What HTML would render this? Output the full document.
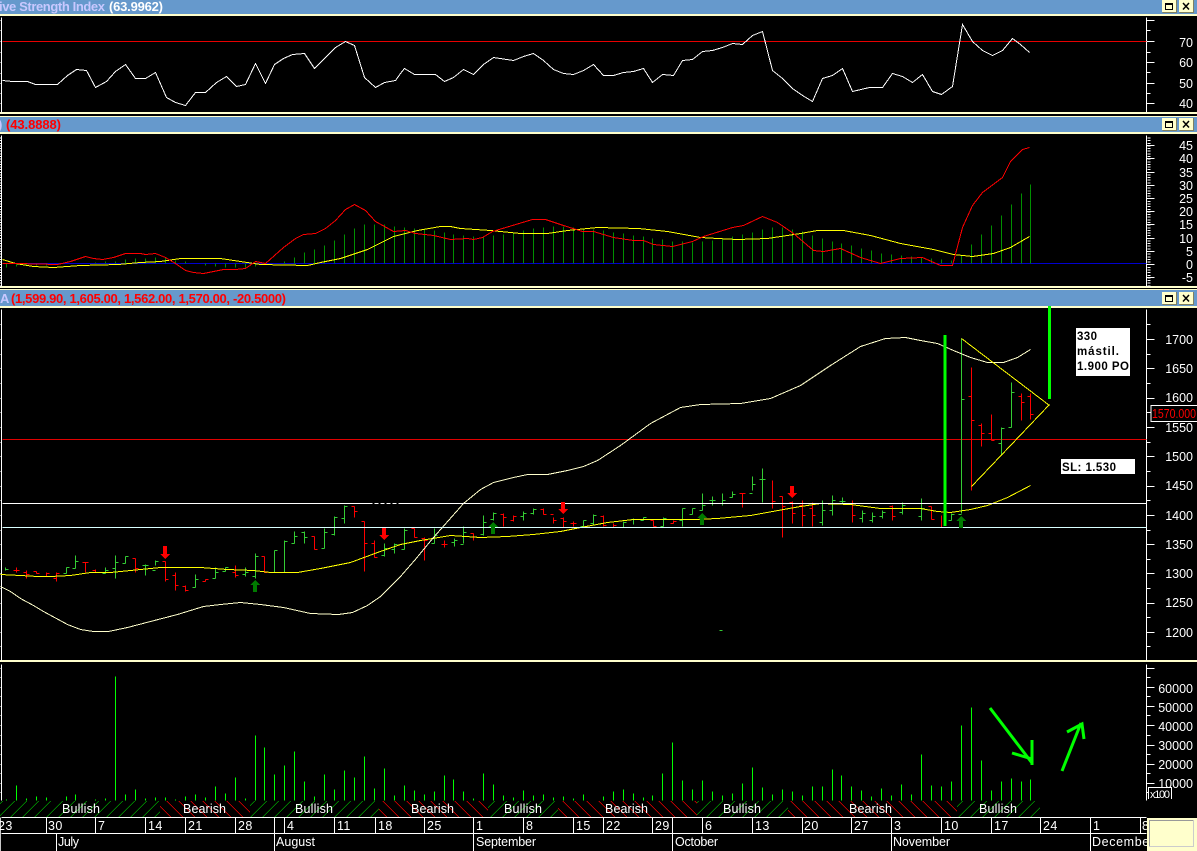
<!DOCTYPE html>
<html><head><meta charset="utf-8"><title>Chart</title>
<style>
html,body{margin:0;padding:0;background:#000;width:1197px;height:851px;overflow:hidden}
svg{display:block}
text{font-family:"Liberation Sans",sans-serif;font-size:12.5px;fill:#fff}
.t{font-weight:bold;font-size:13px}
.n{font-weight:bold;font-size:11.5px;fill:#000}
.l path,.l polyline{fill:none}
</style></head><body>
<svg xmlns="http://www.w3.org/2000/svg" width="1197" height="851" viewBox="0 0 1197 851">
<defs>
<clipPath id="cg"><path d="M0 801h160v16H0zM250 801h129v16H250zM488 801h70v16H488zM697 801h91v16H697zM957 801h83v16H957z"/></clipPath>
<clipPath id="cr"><path d="M160 801h90v16H160zM379 801h109v16H379zM558 801h139v16H558zM788 801h169v16H788z"/></clipPath>
</defs>
<rect width="1197" height="851" fill="#000"/>

<!-- window chrome -->
<g shape-rendering="crispEdges">
<rect x="0" y="0" width="1197" height="14" fill="#6699cc"/><rect x="0" y="14" width="1197" height="2" fill="#ffffcc"/>
<rect x="0" y="112" width="1197" height="2" fill="#ffffcc"/><rect x="0" y="116" width="1197" height="1" fill="#ffffcc"/>
<rect x="0" y="117" width="1197" height="15" fill="#6699cc"/><rect x="0" y="132" width="1197" height="2" fill="#ffffcc"/>
<rect x="0" y="286" width="1197" height="2" fill="#ffffcc"/><rect x="0" y="289" width="1197" height="1" fill="#ffffcc"/>
<rect x="0" y="290" width="1197" height="16" fill="#6699cc"/><rect x="0" y="306" width="1197" height="2" fill="#ffffcc"/>
<rect x="0" y="660" width="1197" height="2" fill="#ffffcc"/>
</g>

<text x="-1" y="11" class="t" style="fill:#c8c8ff" textLength="106">ive Strength Index</text>
<text x="109" y="11" class="t" textLength="54">(63.9962)</text>
<text x="-2" y="129" class="t" style="fill:#c8c8ff">)</text>
<text x="6" y="129" class="t" style="fill:#ff0000" textLength="55">(43.8888)</text>
<text x="0" y="303" class="t" style="fill:#c8c8ff">A</text>
<text x="11" y="303" class="t" style="fill:#ff0000" textLength="275">(1,599.90, 1,605.00, 1,562.00, 1,570.00, -20.5000)</text>

<!-- window buttons -->
<g shape-rendering="crispEdges">
<path fill="#ffffcc" d="M1162 0h14v12h-14zM1179 0h14v12h-14zM1162 118h14v12h-14zM1179 118h14v12h-14zM1162 292h14v12h-14zM1179 292h14v12h-14z"/>
<path fill="none" stroke="#808060" d="M1176.500 0v12.500h-14M1193.500 0v12.500h-14M1176.500 118v12.500h-14M1193.500 118v12.500h-14M1176.500 292v12.500h-14M1193.500 292v12.500h-14"/>
<path fill="none" stroke="#000" d="M1165.500 3.500h7v6h-7zM1165.500 4.500h7M1165.500 121.500h7v6h-7zM1165.500 122.500h7M1165.500 295.500h7v6h-7zM1165.500 296.500h7"/>
</g>
<path fill="none" stroke="#000" stroke-width="1.500" d="M1183 3l6 6.500M1189 3l-6 6.500M1183 121l6 6.500M1189 121l-6 6.500M1183 295l6 6.500M1189 295l-6 6.500"/>

<g class="l" transform="translate(.5 .5)" shape-rendering="crispEdges">
<!-- left axes -->
<path stroke="#fff" d="M1 17V112M0 20h1M0 30h1M0 41h1M0 52h1M0 62h1M0 73h1M0 83h1M0 93h1M0 103h1M1 135V286M1 309V660M0 324h1M0 339h1M0 354h1M0 368h1M0 383h1M0 398h1M0 412h1M0 427h1M0 442h1M0 456h1M0 471h1M0 486h1M0 500h1M0 515h1M0 530h1M0 544h1M0 559h1M0 573h1M0 588h1M0 603h1M0 617h1M0 632h1M0 646h1M1 664V800M0 668h1M0 677h1M0 687h1M0 696h1M0 706h1M0 715h1M0 725h1M0 735h1M0 745h1M0 754h1M0 764h1M0 773h1M0 783h1M0 792h1"/>
<path stroke="#fff" stroke-dasharray="1 1.640" d="M0 137V286"/>

<!-- right axes -->
<path stroke="#fff" d="M1146 17V112M1146 20h8M1146 30h4M1146 41h8M1146 52h4M1146 62h8M1146 72h4M1146 83h8M1146 93h4M1146 103h8"/>
<path stroke="#fff" d="M1146 135V286M1146 145h8M1146 158h8M1146 172h8M1146 185h8M1146 198h8M1146 211h8M1146 224h8M1146 238h8M1146 251h8M1146 264h8M1146 277h8"/>
<path stroke="#fff" stroke-dasharray="1 1.640" d="M1148.500 137V286" stroke-width="1"/>
<path stroke="#fff" stroke-dasharray="1 1.640" d="M1147.500 137V286M1149.500 137V286"/>
<path stroke="#fff" d="M1146 309V660M1146 324h4M1146 339h8M1146 354h4M1146 368h8M1146 383h4M1146 398h8M1146 412h4M1146 427h8M1146 442h4M1146 456h8M1146 471h4M1146 486h8M1146 500h4M1146 515h8M1146 530h4M1146 544h8M1146 559h4M1146 573h8M1146 588h4M1146 603h8M1146 617h4M1146 632h8M1146 646h4"/>
<path stroke="#fff" d="M1146 664V800M1146 668h8M1146 677h4M1146 687h8M1146 696h4M1146 706h8M1146 715h4M1146 725h8M1146 735h4M1146 745h8M1146 754h4M1146 764h8M1146 773h4M1146 783h8M1146 792h4"/>

<!-- RSI -->
<path stroke="#e80000" d="M2 41H1146"/>
<polyline stroke="#fff" points="2,80 12,81 27,81 35,84 57,84 67,75 76,69 86,70 95,87 106,81 115,71 125,64 135,78 145,78 155,72 166,97 175,102 185,105 195,92 205,92 216,82 226,76 236,86 245,84 255,63 265,83 274,64 283,58 292,54 304,53 314,68 325,57 335,47 345,41 354,45 364,77 375,87 384,82 395,80 400,73 404,68 414,74 435,74 444,81 453,77 463,69 473,74 483,64 493,57 513,60 523,56 533,53 543,60 553,69 563,73 573,74 583,70 593,64 603,75 613,75 623,72 633,71 643,68 652,82 662,74 673,75 682,60 692,59 702,51 712,50 722,47 732,43 742,44 752,35 762,31 772,70 782,78 792,88 802,95 812,101 822,78 832,75 842,68 852,91 869,87 882,87 892,73 902,76 912,82 922,74 932,91 941,94 952,86 962,24 972,41 982,50 992,55 1002,50 1012,38 1020,44 1029,52"/>

<!-- MACD -->
<path stroke="#0000d0" d="M2 263H1146"/>
<path stroke="#009000" d="M6 263V267M16 263V266M26 263V265M36 263V265M46 263V265M95 263V262M105 263V261M115 263V261M125 263V259M135 263V258M145 263V258M155 263V257M165 263V257M175 263V260M185 263V261M205 263V265M215 263V266M225 263V267M235 263V267M245 263V267M255 263V266M284 263V261M294 263V257M304 263V252M314 263V249M324 263V245M334 263V240M344 263V234M354 263V228M364 263V224M374 263V224M384 263V224M394 263V226M404 263V227M414 263V228M424 263V229M434 263V230M444 263V232M453 263V234M463 263V235M473 263V236M483 263V236M493 263V235M503 263V234M513 263V233M523 263V230M533 263V228M543 263V227M553 263V226M563 263V226M573 263V227M583 263V228M593 263V229M603 263V230M613 263V232M623 263V233M633 263V235M643 263V236M652 263V238M662 263V239M672 263V241M682 263V241M692 263V242M702 263V241M712 263V240M722 263V238M732 263V236M742 263V234M752 263V232M762 263V229M772 263V227M782 263V227M792 263V229M802 263V231M812 263V235M822 263V238M832 263V241M841 263V243M851 263V245M861 263V248M871 263V250M881 263V253M891 263V254M901 263V255M911 263V256M921 263V257M931 263V258M941 263V259M951 263V260M961 263V255M971 263V244M981 263V234M991 263V225M1001 263V215M1011 263V204M1021 263V193M1030 263V184"/>
<polyline stroke="#ffff00" points="2,259 15,263 33,266 53,267 80,265 118,264 140,262 160,261 180,258 220,258 240,261 260,264 307,265 320,262 340,258 367,249 393,236 417,230 440,226 450,226 460,228 490,230 520,233 547,233 567,230 597,227 638,228 667,231 700,237 717,238 737,239 767,238 800,233 817,230 843,230 870,235 900,243 933,249 953,254 972,256 993,253 1010,247 1029,236"/>
<polyline stroke="#ff0000" points="2,263 17,263 57,264 70,261 85,256 93,258 102,259 113,257 125,253 140,253 145,254 155,253 165,257 175,263 185,270 193,272 203,273 213,271 223,269 235,269 245,268 255,261 265,263 283,247 295,238 303,234 315,233 325,228 335,220 345,209 354,204 365,210 375,221 393,231 405,230 415,233 433,235 450,239 467,238 473,239 482,237 492,231 512,225 532,219 545,219 563,225 582,231 593,231 613,237 633,240 643,240 653,244 672,246 692,241 703,236 732,227 743,225 762,216 777,222 793,233 813,250 823,251 840,248 860,257 880,263 900,258 922,257 940,265 952,265 962,227 972,205 982,192 1002,177 1010,161 1022,149 1029,147"/>

<!-- price -->
<path stroke="#e00000" d="M2 439H1146"/>
<path stroke="#33cc33" d="M5 567V570M5 569h3M66 567V573M63 573h3M66 567h3M75 555V568M72 568h3M75 561h3M105 567V573M102 573h3M105 570h3M115 555V578M112 568h3M115 562h3M125 556V563M122 563h3M125 556h3M145 564V575M142 565h6M155 560V565M152 570h3M155 561h3M195 574V587M192 587h3M195 579h3M215 567V578M212 578h3M215 572h3M225 567V571M222 571h3M225 567h3M245 567V576M242 574h3M245 572h3M255 553V578M252 576h3M255 556h3M274 550V572M274 550h3M284 540V572M284 541h3M294 531V543M291 543h3M294 536h3M304 531V543M301 532h3M304 537h3M324 528V548M321 548h3M324 532h3M334 516V535M331 534h3M334 517h3M344 505V523M341 518h3M344 506h3M384 543V556M381 555h3M384 548h3M394 543V553M391 549h3M394 544h3M404 528V549M401 549h3M404 530h3M434 528V543M431 543h3M434 535h3M454 538V546M451 542h3M454 540h3M463 526V543M460 544h3M463 532h3M483 515V535M480 534h3M483 522h3M493 512V520M490 519h3M493 513h3M523 511V520M520 516h3M523 513h3M533 508V514M530 513h3M533 509h3M583 520V527M580 526h3M583 520h3M593 514V524M590 523h3M593 515h3M623 521V527M620 527h3M623 522h3M633 518V524M630 519h6M643 517V520M640 520h3M643 517h3M663 517V526M660 526h3M663 518h3M682 508V526M679 520h3M682 508h3M692 508V514M689 514h3M692 508h3M702 493V510M699 510h3M702 505h3M712 496V505M709 500h6M722 493V505M722 500h3M732 491V497M729 497h3M732 494h3M752 476V490M749 493h3M752 484h3M762 468V502M759 479h6M822 500V525M819 522h3M822 510h3M832 495V515M829 510h3M832 500h3M842 497V503M839 501h6M862 510V522M859 518h3M862 513h3M872 512V522M869 520h3M872 516h3M882 510V518M879 516h3M882 512h3M902 502V514M899 512h3M902 505h3M921 498V520M918 516h3M921 508h3M951 513V520M948 520h3M951 514h3M961 338V513M958 514h3M961 399h3M1001 427V455M998 443h3M1001 428h3M1011 382V427M1008 427h3M1011 392h3M719 630h3"/>
<path stroke="#ff0000" d="M16 567V572M13 570h6M26 570V578M23 572h3M26 574h3M36 571V573M33 571h3M36 573h3M46 572V576M43 576h3M46 573h3M56 572V581M53 578h3M56 573h3M85 562V572M82 562h3M85 562h3M95 569V572M92 570h3M135 558V572M132 558h3M135 568h3M165 561V581M162 561h3M165 579h3M175 572V590M172 575h3M175 585h3M185 585V591M182 586h3M185 590h3M205 579V581M202 581h3M205 579h3M235 565V577M232 572h3M235 575h3M264 556V572M261 556h3M264 572h3M314 536V549M311 536h3M314 549h3M354 506V517M351 506h3M354 511h3M364 521V571M361 521h3M364 543h3M374 540V557M371 543h3M374 557h3M414 528V537M411 528h3M414 537h3M424 537V560M421 538h3M424 540h3M444 540V547M441 544h6M473 533V540M470 533h3M503 513V526M500 514h3M503 517h3M513 515V521M510 520h3M513 516h3M543 508V514M540 509h3M543 514h3M550 514h3M553 517V523M553 520h3M563 517V527M560 518h3M563 521h3M573 521V526M570 523h6M603 515V526M600 516h3M603 525h3M613 523V527M610 527h3M613 525h3M653 520V526M650 520h3M653 526h3M673 520V523M670 523h3M673 521h3M742 493V507M739 493h6M772 480V508M772 501h3M782 496V537M779 496h3M782 506h3M792 501V523M789 502h3M792 513h3M802 500V526M799 505h3M802 515h3M812 502V526M809 508h3M812 515h3M852 500V522M849 503h3M852 515h3M892 505V520M889 506h3M892 516h3M931 506V519M928 506h3M931 519h3M941 515V527M938 527h3M971 367V490M968 396h3M971 420h3M981 423V446M978 425h3M981 433h3M991 414V440M988 433h3M991 440h3M1021 393V420M1018 396h3M1021 402h3M1030 393V419M1027 396h3M1030 414h3"/>
<polyline stroke="#ffff00" points="0,574 20,575 37,576 50,576 70,575 90,572 110,572 130,570 160,567 200,567 227,569 253,570 270,572 297,572 320,568 350,562 377,552 400,544 420,540 450,535 480,537 507,536 533,534 560,531 580,527 607,522 633,519 667,519 693,519 717,518 750,515 783,509 800,506 820,503 850,504 880,508 900,508 920,508 937,511 950,512 970,509 987,505 1007,497 1030,485"/>
<polyline stroke="#ffffcc" points="0,586 10,591 20,598 33,605 43,611 67,624 80,629 93,631 108,631 127,627 150,621 177,614 203,606 220,604 240,602 260,604 283,607 310,613 338,614 352,612 367,605 380,596 400,576 414,560 433,537 463,503 480,489 493,482 513,477 527,474 547,474 567,470 583,466 597,460 620,445 650,423 680,407 700,404 740,403 770,398 800,385 830,365 860,346 885,338 905,337 920,340 937,343 953,350 970,357 987,362 1003,362 1017,357 1030,349"/>
<path stroke="#fff" d="M2 503H368M400 503H1146"/>
<path stroke="#fff" stroke-dasharray="4 2" d="M368 503H400"/>
<path stroke="#d8ffff" d="M2 527H1146"/>
<path stroke="#ffff00" d="M961 338L1049 405M971 486L1049 404"/>

<!-- volume -->
<path stroke="#00ff00" d="M6 799V800M16 785V800M26 798V800M36 796V800M46 797V800M66 796V800M75 794V800M95 799V800M105 798V800M115 676V800M125 794V800M135 789V800M145 798V800M155 797V800M165 797V800M175 799V800M185 796V800M195 794V800M205 797V800M215 786V800M225 793V800M235 777V800M245 798V800M255 735V800M264 747V800M274 774V800M284 765V800M294 751V800M304 781V800M314 796V800M324 774V800M334 789V800M344 770V800M354 777V800M364 756V800M374 788V800M384 768V800M394 795V800M404 785V800M414 790V800M424 794V800M434 791V800M444 775V800M453 779V800M463 791V800M473 798V800M483 773V800M493 784V800M503 795V800M513 797V800M523 790V800M533 795V800M543 794V800M553 797V800M563 796V800M573 798V800M583 794V800M603 796V800M613 791V800M623 789V800M633 793V800M643 797V800M652 795V800M662 773V800M672 742V800M682 780V800M692 789V800M702 780V800M712 791V800M722 795V800M732 793V800M742 783V800M752 767V800M762 787V800M772 794V800M782 789V800M792 791V800M802 795V800M812 786V800M822 786V800M832 769V800M841 775V800M851 786V800M861 790V800M871 796V800M881 788V800M891 795V800M901 784V800M911 794V800M921 754V800M931 785V800M941 786V800M951 781V800M961 725V800M971 707V800M981 760V800M991 790V800M1001 781V800M1011 778V800M1021 781V800M1030 779V800"/>
</g>

<!-- signal arrows -->
<g shape-rendering="crispEdges">
<path fill="#ff0000" d="M163 546h4v8h3l-5 5-5-5h3zM382 528h4v7h3l-5 5-5-5h3zM561 502h4v7h3l-5 5-5-5h3zM790 486h4v7h3l-5 5-5-5h3z"/>
<path fill="#007a00" d="M255 580l5 5h-3v7h-4v-7h-3zM493 522l5 5h-3v7h-4v-7h-3zM702 513l5 5h-3v7h-4v-7h-3zM961 516l5 5h-3v7h-4v-7h-3z"/>
</g>

<!-- hand-drawn -->
<g fill="none" stroke="#00ff00" stroke-width="3">
<path d="M945 335V526" shape-rendering="crispEdges"/>
<path d="M1049.500 306V399" shape-rendering="crispEdges"/>
<path d="M990 708L1032 763M1012 753L1032 759M1032 740V765"/>
<path d="M1062 771L1081 723M1067 732L1082 724L1084 739"/>
</g>

<!-- notes -->
<rect x="1076" y="328" width="54" height="48" fill="#fff"/>
<text x="1077" y="340" class="n" textLength="20">330</text>
<text x="1077" y="355" class="n" textLength="42">mástil.</text>
<text x="1077" y="370" class="n" textLength="52">1.900 PO</text>
<rect x="1061" y="459" width="74" height="15" fill="#fff"/>
<text x="1062" y="471" class="n" textLength="54">SL: 1.530</text>

<!-- price tag -->
<rect x="1151" y="405.500" width="47" height="16" fill="#000" stroke="#fff"/>
<text x="1152" y="418" style="fill:#ff0000;font-size:13px" textLength="44" lengthAdjust="spacingAndGlyphs">1570.000</text>

<!-- axis labels -->
<g text-anchor="end">
<text x="1193" y="47">70</text><text x="1193" y="67">60</text><text x="1193" y="88">50</text><text x="1193" y="108">40</text>
<text x="1193" y="150">45</text><text x="1193" y="163">40</text><text x="1193" y="177">35</text><text x="1193" y="190">30</text><text x="1193" y="203">25</text><text x="1193" y="216">20</text><text x="1193" y="229">15</text><text x="1193" y="243">10</text><text x="1193" y="256">5</text><text x="1193" y="269">0</text><text x="1193" y="282">-5</text>
<text x="1193" y="344">1700</text><text x="1193" y="373">1650</text><text x="1193" y="402">1600</text><text x="1193" y="432">1550</text><text x="1193" y="461">1500</text><text x="1193" y="490">1450</text><text x="1193" y="520">1400</text><text x="1193" y="549">1350</text><text x="1193" y="578">1300</text><text x="1193" y="607">1250</text><text x="1193" y="637">1200</text>
<text x="1193" y="693">60000</text><text x="1193" y="712">50000</text><text x="1193" y="731">40000</text><text x="1193" y="750">30000</text><text x="1193" y="769">20000</text><text x="1193" y="788">10000</text>
</g>
<path d="M1148.500 799V787.500H1171.500V799" fill="#000" stroke="#fff" shape-rendering="crispEdges"/>
<text x="1150" y="798" style="font-size:11px" textLength="20">x100</text>

<!-- sentiment band -->
<g clip-path="url(#cg)"><path transform="matrix(1 0 -1 1 809 0)" d="M-30 809H1080" fill="none" stroke="#00a000" stroke-width="16" stroke-dasharray="1 11" shape-rendering="crispEdges"/></g>
<g clip-path="url(#cr)"><path transform="matrix(1 0 1 1 -809 0)" d="M-30 809H1080" fill="none" stroke="#f00000" stroke-width="16" stroke-dasharray="1 11" shape-rendering="crispEdges"/></g>
<text x="62" y="813" textLength="38">Bullish</text>
<text x="183" y="813" textLength="43">Bearish</text>
<text x="295" y="813" textLength="38">Bullish</text>
<text x="411" y="813" textLength="43">Bearish</text>
<text x="504" y="813" textLength="38">Bullish</text>
<text x="605" y="813" textLength="43">Bearish</text>
<text x="723" y="813" textLength="38">Bullish</text>
<text x="849" y="813" textLength="43">Bearish</text>
<text x="979" y="813" textLength="38">Bullish</text>

<!-- date rows -->
<g class="l" transform="translate(.5 .5)" shape-rendering="crispEdges">
<path stroke="#fff" d="M1 817H1146M1 833H1146M46 817V833M95 817V833M145 817V833M185 817V833M235 817V833M274 817V833M284 817V833M334 817V833M375 817V833M424 817V833M473 817V833M523 817V833M573 817V833M603 817V833M652 817V833M672 817V833M702 817V833M752 817V833M802 817V833M851 817V833M891 817V833M941 817V833M991 817V833M1040 817V833M1090 817V833M1140 817V833M56 833V851M274 833V851M473 833V851M672 833V851M891 833V851M1090 833V851"/>
<path stroke="#c8c8c8" d="M0 817V851"/>
</g>
<g style="letter-spacing:.4px">
<text x="-2" y="830">23</text><text x="48" y="830">30</text><text x="98" y="830">7</text><text x="148" y="830">14</text><text x="188" y="830">21</text><text x="238" y="830">28</text><text x="287" y="830">4</text><text x="337" y="830">11</text><text x="378" y="830">18</text><text x="427" y="830">25</text><text x="476" y="830">1</text><text x="526" y="830">8</text><text x="576" y="830">15</text><text x="606" y="830">22</text><text x="655" y="830">29</text><text x="705" y="830">6</text><text x="755" y="830">13</text><text x="804" y="830">20</text><text x="854" y="830">27</text><text x="894" y="830">3</text><text x="944" y="830">10</text><text x="994" y="830">17</text><text x="1043" y="830">24</text><text x="1093" y="830">1</text><text x="1142" y="830">8</text>
</g>
<text x="58" y="846" textLength="21">July</text>
<text x="276" y="846" textLength="39">August</text>
<text x="476" y="846" textLength="60">September</text>
<text x="675" y="846" textLength="43">October</text>
<text x="893" y="846" textLength="57">November</text>
<text x="1092" y="846" textLength="62">December</text>

<!-- corner -->
<g shape-rendering="crispEdges">
<rect x="1147" y="818" width="50" height="33" fill="#ffffcc"/>
<path d="M1149.500 846.500V820.500H1193.500" fill="none" stroke="#999"/>
<path d="M1193.500 820.500V846.500H1149.500" fill="none" stroke="#ccc"/>
</g>
</svg>
</body></html>
